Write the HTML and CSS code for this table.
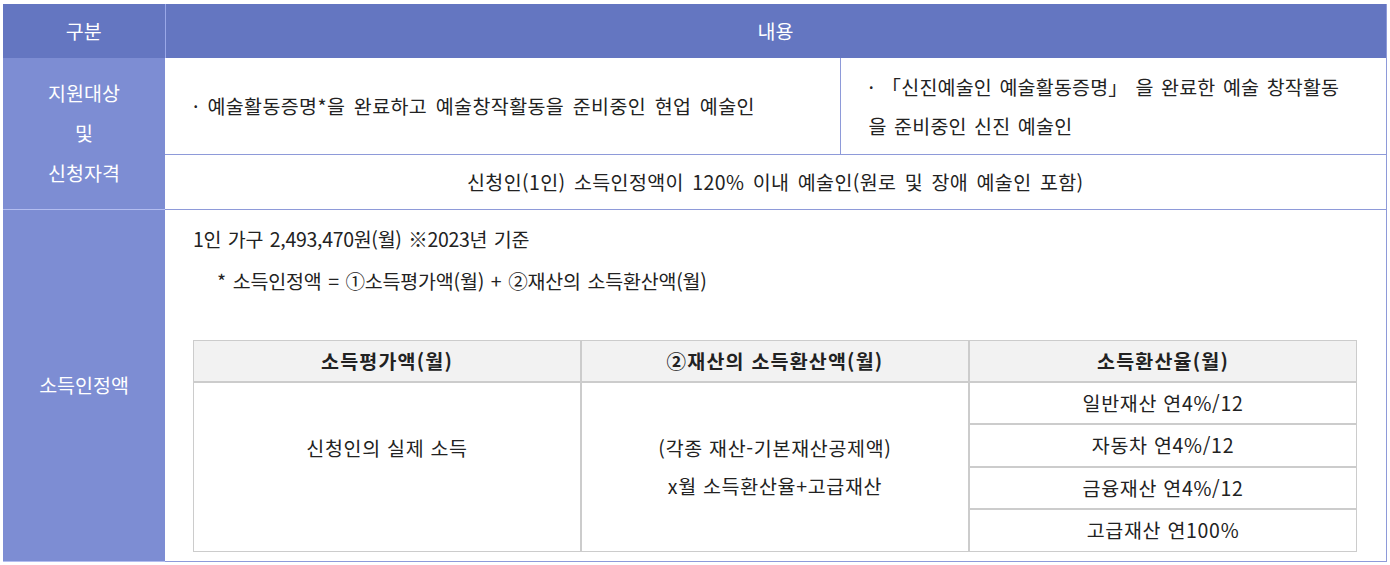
FILE: index.html
```html
<!DOCTYPE html>
<html lang="ko">
<head>
<meta charset="utf-8">
<title>지원대상</title>
<link rel="stylesheet" href="styles.css">
</head>
<body>
<div class="wrap">
<table class="main">
  <colgroup>
    <col class="c-head">
    <col class="c-a">
    <col class="c-b">
  </colgroup>
  <thead>
    <tr class="r-head">
      <th class="th-first">구분</th>
      <th colspan="2">내용</th>
    </tr>
  </thead>
  <tbody>
    <tr class="r-1a">
      <th class="side" rowspan="2">지원대상<br>및<br>신청자격</th>
      <td class="txt">· 예술활동증명*을 완료하고 예술창작활동을 준비중인 현업 예술인</td>
      <td class="txt split">· 「신진예술인 예술활동증명」 을 완료한 예술 창작활동<br>을 준비중인 신진 예술인</td>
    </tr>
    <tr class="r-1b">
      <td class="center" colspan="2">신청인(1인) 소득인정액이 120% 이내 예술인(원로 및 장애 예술인 포함)</td>
    </tr>
    <tr class="r-2">
      <th class="side last">소득인정액</th>
      <td class="income" colspan="2">
        <p class="line first">1인 가구 2,493,470원(월) ※2023년 기준</p>
        <p class="line indent">* 소득인정액 = ①소득평가액(월) + ②재산의 소득환산액(월)</p>
        <table class="sub">
          <thead>
            <tr>
              <th>소득평가액(월)</th>
              <th>②재산의 소득환산액(월)</th>
              <th>소득환산율(월)</th>
            </tr>
          </thead>
          <tbody>
            <tr>
              <td class="big" rowspan="4">신청인의 실제 소득<br>&nbsp;</td>
              <td class="big" rowspan="4">(각종 재산-기본재산공제액)<br>x월 소득환산율+고급재산</td>
              <td class="rate">일반재산 연4%/12</td>
            </tr>
            <tr><td class="rate">자동차 연4%/12</td></tr>
            <tr><td class="rate">금융재산 연4%/12</td></tr>
            <tr><td class="rate">고급재산 연100%</td></tr>
          </tbody>
        </table>
      </td>
    </tr>
  </tbody>
</table>
</div>
</body>
</html>
```

FILE: styles.css
```css
* { box-sizing: border-box; }
html, body { margin: 0; padding: 0; background: #ffffff; }
body {
  font-family: "Noto Sans CJK KR", "Noto Sans", sans-serif;
  font-size: 19.5px;
  color: #222222;
}
.wrap { padding: 4px 0 0 3px; }

.main {
  width: 1383px;
  table-layout: fixed;
  border-collapse: collapse;
  border-right: 1px solid #8e9ad9;
}
.c-head { width: 162px; }
.c-a { width: 675px; }
.c-b { width: 546px; }

.main th, .main td { padding: 0; font-weight: normal; }

.r-head th {
  background: #6476c1;
  color: #ffffff;
  height: 54px;
  text-align: center;
  vertical-align: middle;
  line-height: 40px;
}
.r-head .th-first { border-right: 1px solid #9aa8e8; }

.main .side {
  background: #7d8dd3;
  color: #ffffff;
  text-align: center;
  vertical-align: middle;
  line-height: 40px;
  border-bottom: 1px solid #b3bdf0;
}

.r-1a { height: 96px; }
.r-1b { height: 55px; }
.r-2 { height: 352px; }

.main td {
  border-bottom: 1px solid #8e9ad9;
  vertical-align: middle;
}
.main td.txt {
  padding: 0 20px 0 28px;
  line-height: 39px;
  letter-spacing: 0.4px;
  word-spacing: 2.7px;
}
.main td.split {
  border-left: 1px solid #8e9ad9;
  letter-spacing: 0.2px;
  word-spacing: 1.8px;
}
.main td.center {
  text-align: center;
  line-height: 40px;
  letter-spacing: 0.4px;
  word-spacing: 2.5px;
}

.main td.income {
  vertical-align: top;
  padding: 8px 28px 8px 28px;
}
.line {
  margin: 0;
  line-height: 42px;
  word-spacing: 1.5px;
}
.line.first { letter-spacing: -0.3px; }
.line.indent {
  padding-left: 24px;
  letter-spacing: -0.2px;
}

.sub {
  margin-top: 38px;
  width: 1164px;
  table-layout: fixed;
  border-collapse: separate;
  border-spacing: 0;
}
.sub th, .sub td {
  border: 1px solid #cccccc;
  text-align: center;
  vertical-align: middle;
  padding: 0;
}
.sub th {
  background: #f2f2f2;
  font-weight: bold;
  line-height: 40px;
  letter-spacing: 1.2px;
  color: #222222;
}
.sub td.big {
  line-height: 38px;
  letter-spacing: 0.7px;
}
.sub td.rate {
  line-height: 40.5px;
  letter-spacing: 0.7px;
}
```
